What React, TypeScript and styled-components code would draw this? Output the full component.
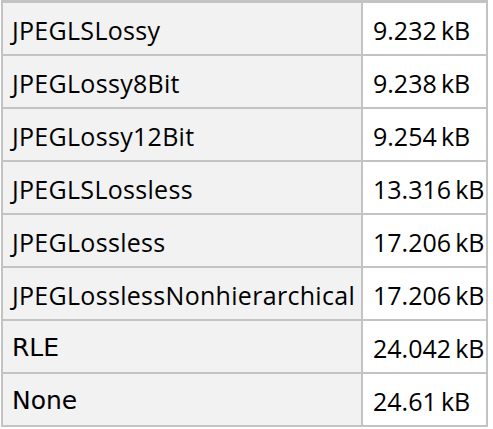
import React from "react";
import styled, { createGlobalStyle } from "styled-components";

const Global = createGlobalStyle`
  html, body { margin: 0; padding: 0; background: #ffffff; }
  body { font-family: "Open Sans", sans-serif; }
`;

const Table = styled.div`
  margin-left: 1px;
  width: 487px;
  box-sizing: border-box;
  display: grid;
  grid-template-columns: 358px 123px;
  grid-auto-rows: 51px;
  gap: 2px;
  padding: 3px 2px 2px 2px;
  background: #c3c3c3;
`;

const Cell = styled.div<{ $head?: boolean; $alt?: boolean }>`
  display: flex;
  align-items: center;
  padding: 2px 0 0 9px;
  box-sizing: border-box;
  background: ${(p) => (p.$head ? "#f2f2f2" : "#ffffff")};
  font-family: ${(p) =>
    p.$alt ? '"DejaVu Sans", sans-serif' : '"Open Sans", sans-serif'};
  font-size: 25px;
  letter-spacing: ${(p) => (p.$alt ? "0" : "0.3px")};
  color: #000000;
  white-space: nowrap;
  overflow: hidden;
`;

const Value = styled(Cell)`
  padding-left: 10px;
  letter-spacing: 0;
`;

const rows: [string, string, boolean?][] = [
  ["JPEGLSLossy", "9.232 kB"],
  ["JPEGLossy8Bit", "9.238 kB"],
  ["JPEGLossy12Bit", "9.254 kB"],
  ["JPEGLSLossless", "13.316 kB"],
  ["JPEGLossless", "17.206 kB"],
  ["JPEGLosslessNonhierarchical", "17.206 kB"],
  ["RLE", "24.042 kB", true],
  ["None", "24.61 kB", true],
];

export default function App() {
  return (
    <>
      <Global />
      <Table>
        {rows.map(([name, size, alt]) => (
          <React.Fragment key={name}>
            <Cell $head $alt={alt}>
              {name}
            </Cell>
            <Value>{size.replace(" ", "\u2009")}</Value>
          </React.Fragment>
        ))}
      </Table>
    </>
  );
}
